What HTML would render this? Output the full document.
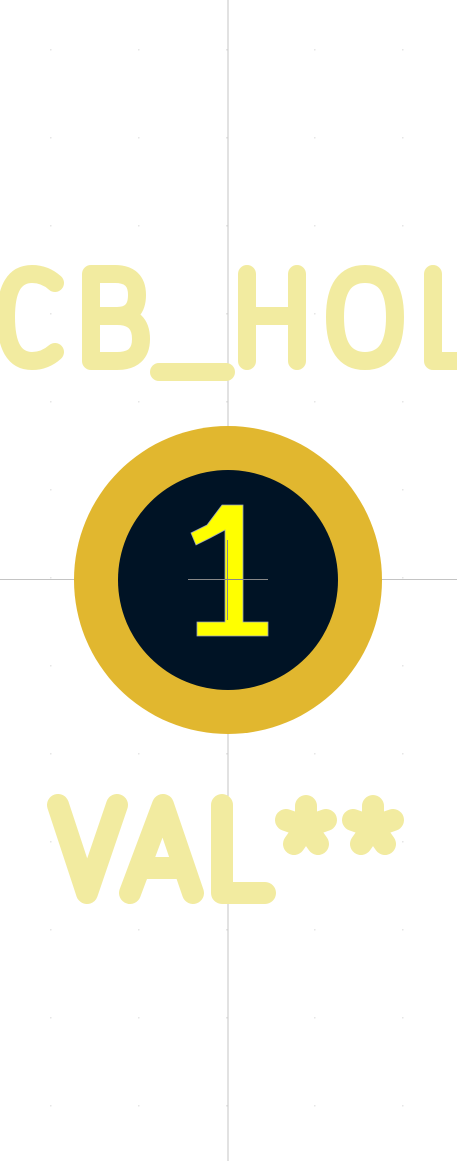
<!DOCTYPE html>
<html><head><style>html,body{margin:0;padding:0;background:#fff;overflow:hidden}</style></head>
<body>
<svg width="457" height="1161" viewBox="0 0 457 1161" xmlns="http://www.w3.org/2000/svg">
<defs><pattern id="g" x="50" y="49" width="88" height="88" patternUnits="userSpaceOnUse"><rect width="1.5" height="1.5" fill="#e6e6e6"/></pattern></defs>
<rect width="457" height="1161" fill="url(#g)"/>
<line x1="228" y1="0" x2="228" y2="1161" stroke="#c4c4c4" stroke-width="1"/>
<line x1="0" y1="579.5" x2="457" y2="579.5" stroke="#c4c4c4" stroke-width="1"/>
<g fill="none" stroke="#f2eba0" stroke-width="18" stroke-linecap="round" stroke-linejoin="round">
<path d="M55 283 Q45 274 32 274 Q6 274 6 317 Q6 361 32 361 Q45 361 55 352"/>
<path d="M91 274 L91 361 L117 361 Q141 361 141 339 Q141 316 117 316 L91 316 M91 274 L115 274 Q137 274 137 295 Q137 316 117 316"/>
<path d="M159 372 L226 372"/>
<path d="M247 274 L247 361 M297 274 L297 361 M247 316 L297 316"/>
<path d="M365 274 Q335 274 335 317 Q335 361 365 361 Q395 361 395 317 Q395 274 365 274 Z"/>
<path d="M433 274 L433 361 L470 361"/>
</g>
<g fill="none" stroke="#f2eba0" stroke-width="22" stroke-linecap="round" stroke-linejoin="round">
<path d="M58 805 L87 893 L117 805"/>
<path d="M130 893 L163 805 L193 893 M140 868 L183 868"/>
<path d="M222 805 L222 893 L265 893"/>
<path d="M306 806 L306 827 M286 820 L306 827 M326 820 L306 827 M294 844 L306 827 M318 844 L306 827"/>
<path d="M373 806 L373 827 M353 820 L373 827 M393 820 L373 827 M361 844 L373 827 M385 844 L373 827"/>
</g>
<circle cx="228" cy="580" r="154" fill="#e1b72f"/>
<circle cx="228" cy="580" r="110" fill="#001325"/>
<polygon points="222,505 243,505 243,622 268,622 268,636 197,636 197,622 225,622 225,530 210,538 196,545 191,533 207,525" fill="#ffff00" stroke="#9aa3b8" stroke-width="0.8"/>
<line x1="188" y1="579.5" x2="268" y2="579.5" stroke="#888" stroke-width="1"/>
<line x1="227.5" y1="540" x2="227.5" y2="620" stroke="#888" stroke-width="1"/>
</svg>
</body></html>
